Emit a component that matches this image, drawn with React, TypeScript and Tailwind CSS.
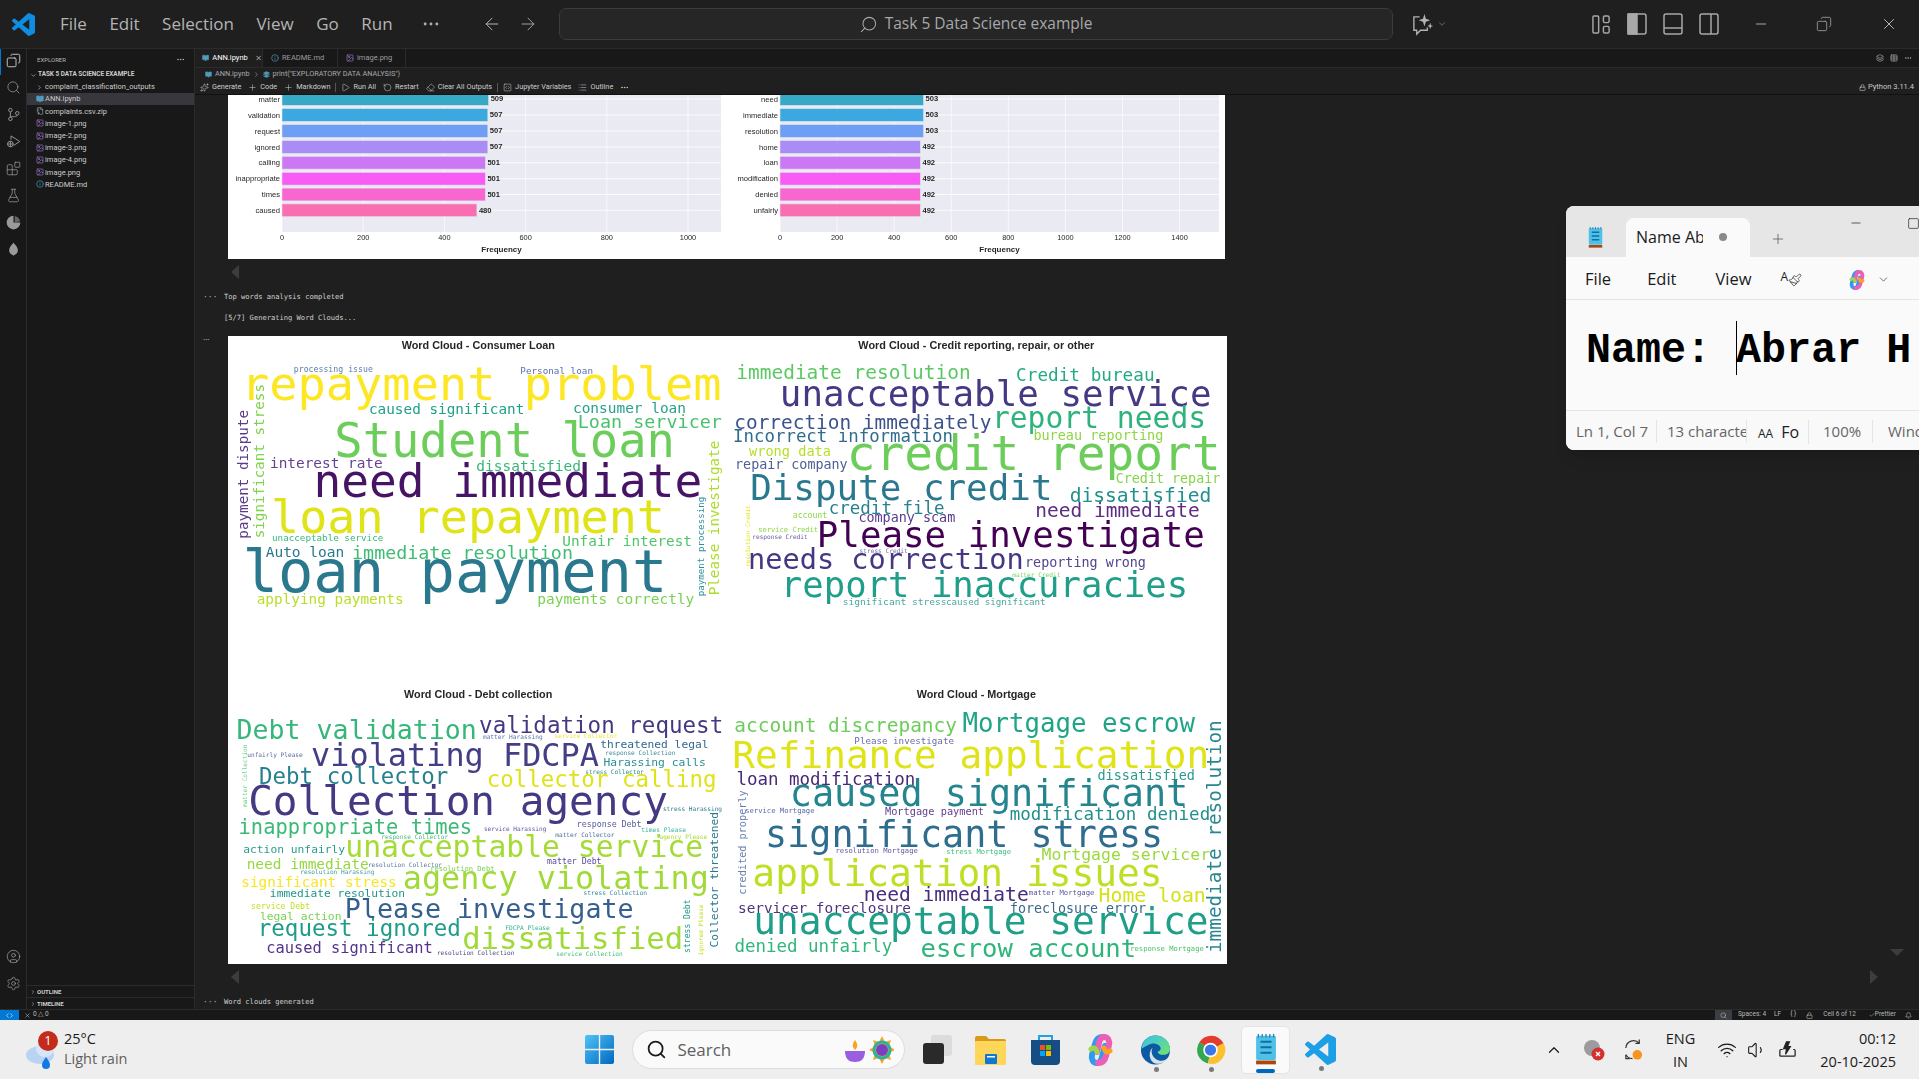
import React from 'react';
import {
  ArrowLeft, ArrowRight, ChevronDown, ChevronRight, ChevronUp, CircleUser, Code, Copy, Eraser, FlaskConical,
  Info, Image as ImageIcon, Layers, List, Lock, Minus, MoreHorizontal, Play, Plus, RotateCcw, Search,
  Settings, Sparkles, Square, SquareCode, Table, Volume1, Wifi, X, FileArchive, Blocks, BookOpen, Paintbrush, Bell, Check,
} from 'lucide-react';

const UI = "font-['Open_Sans',sans-serif]";
const SMALL = "font-['Roboto',sans-serif]";

// ---- word cloud data: text, x1, x2, baseline, colour (coords are 3x of the picture)
type W = [string, number, number, number, string, ('v')?];

const consumerLoan: W[] = [
  ['processing issue', 208, 442, 112, '#5c7fa8'], ['Personal loan', 888, 1102, 117, '#5f6eb0'],
  ['repayment problem', 58, 1480, 195, '#fde725'], ['caused significant', 435, 895, 237, '#1fa187'],
  ['consumer loan', 1047, 1380, 235, '#26a18a'], ['Student loan', 338, 1340, 365, '#6ccd5a'],
  ['Loan servicer', 1062, 1487, 280, '#4ac16d'], ['need immediate', 275, 1422, 487, '#471365'],
  ['interest rate', 138, 470, 400, '#65418f'], ['dissatisfied', 757, 1065, 407, '#35b779'],
  ['loan repayment', 148, 1310, 595, '#dfe318'], ['unacceptable service', 143, 473, 618, '#37b87a'],
  ['Auto loan', 125, 355, 667, '#2a788e'], ['immediate resolution', 385, 1040, 672, '#3fbc73'],
  ['Unfair interest', 1015, 1398, 633, '#50c46a'], ['loan payment', 65, 1315, 770, '#2a788e'],
  ['applying payments', 98, 533, 808, '#b8de29'], ['payments correctly', 940, 1405, 808, '#7ad151'],
  ['significant stress', 607, 150, 117, '#7fd34e', 'v'], ['payment dispute', 608, 228, 70, '#5b3b8c', 'v'],
  ['Please investigate', 778, 320, 1482, '#addc30', 'v'], ['payment processing', 782, 487, 1436, '#2f8f9e', 'v'],
];

const creditReporting: W[] = [
  ['immediate resolution', 23, 718, 133, '#5cc863'], ['Credit bureau', 862, 1270, 138, '#23a983'],
  ['unacceptable service', 157, 1437, 212, '#443983'], ['correction immediately', 17, 780, 282, '#3b528b'],
  ['report needs', 792, 1422, 280, '#2eb37c'], ['Incorrect information', 13, 665, 322, '#2f6c8e'],
  ['bureau reporting', 913, 1297, 315, '#8ed645'], ['wrong data', 60, 300, 362, '#b5de2b'],
  ['repair company', 18, 350, 402, '#4e5f94'], ['credit report', 360, 1462, 405, '#6ccd5a'],
  ['Credit repair', 1160, 1468, 443, '#86d549'], ['Dispute credit', 68, 960, 495, '#2a788e'],
  ['dissatisfied', 1023, 1440, 500, '#21908c'], ['credit file', 300, 640, 538, '#26828e'],
  ['need immediate', 920, 1405, 545, '#5a2d82'], ['account', 190, 290, 550, '#8ed645'],
  ['company scam', 388, 673, 560, '#5b3a8e'], ['service Credit', 86, 263, 592, '#8ed645'],
  ['response Credit', 68, 232, 611, '#6a5a9a'], ['Please investigate', 268, 1417, 635, '#440154'],
  ['stress Credit', 390, 532, 653, '#7b6aa0'], ['needs correction', 60, 875, 702, '#453781'],
  ['reporting wrong', 888, 1245, 695, '#52458e'], ['matter Credit', 848, 990, 725, '#6fd060'],
  ['report inaccuracies', 160, 1367, 787, '#1f9e89'], ['significant stress', 340, 648, 810, '#49a8a0'],
  ['caused significant', 650, 945, 810, '#49a8a0'], ['resolution Credit', 695, 512, 60, '#e8e419', 'v'],
];

const debtCollection: W[] = [
  ['Debt validation', 40, 750, 177, '#35b779'], ['validation request', 767, 1490, 158, '#453781'],
  ['matter Harassing', 775, 952, 178, '#5a7aaa'], ['service Collector', 990, 1175, 173, '#f0e442'],
  ['violating FDCPA', 265, 1115, 258, '#433e85'], ['threatened legal', 1128, 1448, 205, '#31688e'],
  ['unfairly Please', 68, 232, 231, '#5a6a9a'], ['response Collection', 1142, 1350, 224, '#3a8a9a'],
  ['Harassing calls', 1138, 1440, 258, '#2a8f94'], ['stress Collector', 1082, 1255, 281, '#2f8a8a'],
  ['Debt collector', 107, 665, 312, '#26818e'], ['collector calling', 790, 1470, 320, '#dfe318'],
  ['Collection agency', 78, 1320, 405, '#443983'], ['stress Harassing', 1315, 1490, 393, '#2f7a8a'],
  ['inappropriate times', 45, 737, 462, '#3aba76'], ['service Harassing', 778, 963, 452, '#5858a0'],
  ['response Debt', 1057, 1248, 442, '#5a5a9a'], ['times Please', 1250, 1382, 457, '#3ab0a0'],
  ['matter Collector', 992, 1167, 470, '#4a6a9a'], ['response Collector', 470, 668, 477, '#47b87a'],
  ['agency Please', 1305, 1445, 477, '#a6db35'], ['action unfairly', 57, 358, 518, '#2a9d8a'],
  ['unacceptable service', 367, 1428, 530, '#a5db36'], ['need immediate', 68, 428, 568, '#95d840'],
  ['resolution Collector', 430, 650, 560, '#5a7aa0'], ['resolution Debt', 617, 807, 574, '#7ad151'],
  ['matter Debt', 968, 1128, 553, '#5a4a9a'], ['resolution Harassing', 227, 447, 582, '#3f9a9a'],
  ['significant stress', 52, 512, 622, '#f8e621'], ['agency violating', 540, 1445, 628, '#a0da39'],
  ['immediate resolution', 137, 538, 650, '#1f968b'], ['stress Collection', 1077, 1265, 646, '#3a8a9a'],
  ['service Debt', 80, 253, 688, '#c2df23'], ['legal action', 107, 347, 720, '#7ad151'],
  ['Please investigate', 365, 1220, 715, '#355f8d'], ['request ignored', 103, 703, 768, '#1e9c89'],
  ['FDCPA Please', 842, 973, 750, '#2fb08a'], ['dissatisfied', 718, 1368, 807, '#a0da39'],
  ['caused significant', 127, 620, 820, '#55338a'], ['resolution Collection', 637, 867, 824, '#4a4a8a'],
  ['service Collection', 995, 1192, 827, '#3ec07a'], ['matter Collection', 380, 195, 65, '#6fd08a', 'v'],
  ['Collector threatened', 800, 398, 1478, '#2a7a8e', 'v'], ['stress Debt', 817, 660, 1394, '#1f9a8a', 'v'],
  ['ignored Please', 825, 675, 1433, '#c2df23', 'v'],
];

const mortgage: W[] = [
  ['account discrepancy', 17, 677, 155, '#6ccd5a'], ['Mortgage escrow', 703, 1390, 157, '#20a486'],
  ['Please investigate', 375, 670, 192, '#6a6aa8'], ['Refinance application', 15, 1430, 265, '#dfe318'],
  ['dissatisfied', 1105, 1392, 300, '#2b9a8a'], ['loan modification', 23, 552, 316, '#482878'],
  ['caused significant', 187, 1367, 377, '#24858e'], ['service Mortgage', 47, 252, 398, '#5a6aa8'],
  ['Mortgage payment', 467, 760, 405, '#65408f'], ['modification denied', 843, 1437, 420, '#21908c'],
  ['significant stress', 113, 1292, 500, '#2e6d8e'], ['resolution Mortgage', 318, 562, 518, '#6a5aa0'],
  ['stress Mortgage', 650, 842, 521, '#3ec07a'], ['Mortgage servicer', 938, 1437, 540, '#9bd93c'],
  ['application issues', 75, 1290, 617, '#bddf26'], ['need immediate', 405, 892, 662, '#472d7b'],
  ['matter Mortgage', 898, 1092, 646, '#5a5a9e'], ['Home loan', 1110, 1423, 665, '#d5e21a'],
  ['servicer foreclosure', 27, 540, 698, '#50327e'], ['foreclosure error', 843, 1245, 698, '#39688e'],
  ['unacceptable service', 78, 1428, 763, '#1f9e89'], ['denied unfairly', 17, 483, 815, '#31b57b'],
  ['escrow account', 577, 1213, 830, '#2fb47c'], ['response Mortgage', 1202, 1420, 812, '#4ac16d'],
  ['credited properly', 642, 333, 47, '#6a82b0', 'v'], ['immediate resolution', 815, 125, 1472, '#2a868e', 'v'],
];

function WordCloud({ title, tx, vb, words }: { title: string; tx: [number, number, number]; vb: string; words: W[] }) {
  return (
    <svg viewBox={vb} className="w-full h-full blur-[0.4px] font-['DejaVu_Sans_Mono',monospace]">
      <text x={tx[0]} y={tx[2]} textLength={tx[1] - tx[0]} lengthAdjust="spacingAndGlyphs" fontSize={30} fontWeight={700} fill="#262626" className="font-['Liberation_Sans',sans-serif]">
        {title}
      </text>
      {words.map(([t, a, b, c, fill, v], i) => {
        // the measured extents are ink, the font has about 0.07em of bearing on each side
        const fs = Math.abs(b - a) / (t.length * 0.602 - 0.14);
        const adv = t.length * 0.602 * fs;
        return v ? (
          <text key={i} transform={`translate(${c} ${a + 0.07 * fs}) rotate(-90)`} fontSize={fs} fill={fill} textLength={adv} lengthAdjust="spacingAndGlyphs">{t}</text>
        ) : (
          <text key={i} x={a - 0.07 * fs} y={c} fontSize={fs} fill={fill} textLength={adv} lengthAdjust="spacingAndGlyphs">{t}</text>
        );
      })}
    </svg>
  );
}

// ---- bar charts
const barColors = ['#38a9c5', '#3ca8e0', '#6e9ff5', '#a98cf5', '#cc78f5', '#f95cf5', '#f866cf', '#f96eb0'];
const rowY = [99, 115, 131, 147, 162.7, 178.7, 194.5, 210.3];
const leftBars: [string, number][] = [['matter', 509], ['validation', 507], ['request', 507], ['ignored', 507], ['calling', 501], ['inappropriate', 501], ['times', 501], ['caused', 480]];
const rightBars: [string, number][] = [['need', 503], ['immediate', 503], ['resolution', 503], ['home', 492], ['loan', 492], ['modification', 492], ['denied', 492], ['unfairly', 492]];

function Chart({ x0, x1, scale, bars, ticks }: { x0: number; x1: number; scale: number; bars: [string, number][]; ticks: number[] }) {
  return (
    <g>
      <rect x={x0} y={90} width={x1 - x0} height={142} fill="#eaeaf2" />
      {ticks.map((t) => <line key={t} x1={x0 + t * scale} x2={x0 + t * scale} y1={90} y2={232} stroke="#fff" strokeWidth={0.7} />)}
      {bars.map(([name, v], i) => (
        <g key={name}>
          <line x1={x0} x2={x1} y1={rowY[i]} y2={rowY[i]} stroke="#fff" strokeWidth={0.8} />
          <rect x={x0} y={rowY[i] - 6.4} width={v * scale} height={12.8} fill={barColors[i]} stroke="#dfe3ee" strokeWidth={0.6} />
          <text x={x0 - 2} y={rowY[i] + 2.6} textAnchor="end" fontSize={7.6} fill="#262626">{name}</text>
          <text x={x0 + v * scale + 2} y={rowY[i] + 2.3} fontSize={7.6} fontWeight={700} fill="#262626">{v}</text>
        </g>
      ))}
      {ticks.map((t) => <text key={t} x={x0 + t * scale} y={240} textAnchor="middle" fontSize={7.4} fill="#262626">{t}</text>)}
      <text x={(x0 + x1) / 2} y={251.5} textAnchor="middle" fontSize={8} fontWeight={700} fill="#262626">Frequency</text>
    </g>
  );
}

function VsCodeLogo({ className, fill = '#23a3ee' }: { className: string; fill?: string }) {
  return (
    <svg viewBox="0 0 24 24" className={className} fill={fill}>
      <path d="M23.15 2.587L18.21.21a1.494 1.494 0 0 0-1.705.29l-9.46 8.63-4.12-3.128a.999.999 0 0 0-1.276.057L.327 7.261A1 1 0 0 0 .326 8.74L3.899 12 .326 15.26a1 1 0 0 0 .001 1.479L1.65 17.94a.999.999 0 0 0 1.276.057l4.12-3.128 9.46 8.63a1.492 1.492 0 0 0 1.704.29l4.942-2.377A1.5 1.5 0 0 0 24 20.06V3.939a1.5 1.5 0 0 0-.85-1.352zm-5.146 14.861L10.826 12l7.178-5.448v10.896z" />
    </svg>
  );
}

function NotepadIcon({ className }: { className: string }) {
  return (
    <svg viewBox="0 0 20 28" className={className}>
      <rect x="1" y="1.5" width="18" height="22" rx="1.5" fill="#4fc0e8" />
      <rect x="1" y="24" width="18" height="3.5" fill="#a8480f" />
      <path d="M5 7h10M5 12h10M5 17h10" stroke="#0f6f9e" strokeWidth="1.8" />
      <path d="M3 0v3M6.5 0v3M10 0v3M13.5 0v3M17 0v3" stroke="#0f6f9e" strokeWidth="1" />
    </svg>
  );
}

function CopilotIcon({ className }: { className: string }) {
  return (
    <svg viewBox="0 0 31 32" className={className}>
      <path d="M18 3c-5 0-7 3-8 7L7 21c-1 4 1 8 5 8 3 0 4-2 5-6l3-11" fill="none" stroke="#2f9bf0" strokeWidth="6" strokeLinecap="round" />
      <path d="M13 29c5 0 7-3 8-7l3-11c1-4-1-8-5-8-3 0-4 2-5 6l-2 9" fill="none" stroke="#ec5fb4" strokeWidth="6" strokeLinecap="round" />
      <path d="M6 15c3-2 5-1 6 3" fill="none" stroke="#9ed84a" strokeWidth="5" strokeLinecap="round" />
      <path d="M25 17c-3 2-5 1-6-3" fill="none" stroke="#f6a623" strokeWidth="5" strokeLinecap="round" />
    </svg>
  );
}

function TitleBar() {
  const menus = ['File', 'Edit', 'Selection', 'View', 'Go', 'Run'];
  return (
    <div className={`h-[49px] shrink-0 flex items-center border-b border-[#2b2b2b] bg-[#1f1f1f] ${UI}`}>
      <VsCodeLogo className="ml-[12px] w-[23px] h-[23px]" fill="#0e8ee0" />
      <div className="ml-[25px] flex gap-[22.5px] text-[17px] text-[#b4b4b4]">
        {menus.map((m) => <span key={m}>{m}</span>)}
      </div>
      <MoreHorizontal className="ml-[28px] w-[20px] h-[20px] text-[#b4b4b4]" strokeWidth={1.5} />
      <ArrowLeft className="ml-[41px] w-[20px] h-[20px] text-[#b4b4b4]" strokeWidth={1.2} />
      <ArrowRight className="ml-[16px] w-[20px] h-[20px] text-[#a0a0a0]" strokeWidth={1.2} />
      <div className="ml-[21px] w-[834px] h-[32px] rounded-[7px] border border-[#3c3c3c] bg-[#262626] flex items-center justify-center gap-[7px] text-[#a8a8a8] text-[15.5px]">
        <Search className="w-[19px] h-[19px] -scale-x-100" strokeWidth={1.3} />
        <span>Task 5 Data Science example</span>
      </div>
      <svg viewBox="0 0 24 24" className="ml-[18px] w-[23px] h-[23px] text-[#b4b4b4]" fill="none" stroke="currentColor" strokeWidth="1.4">
        <path d="M9 4H3v14h3v4l4-4h7v-3" />
        <path d="M14 1l1.5 5L20 7.5 15.5 9 14 14l-1.5-5L8 7.5 12.500 6z" fill="currentColor" stroke="none" />
        <path d="M20 10l.8 2.700L23 13.500l-2.200.8L20 17l-.8-2.700-2.200-.8 2.200-.8z" fill="currentColor" stroke="none" />
      </svg>
      <ChevronDown className="ml-[3px] w-[10px] h-[10px] text-[#777]" />
      <div className="ml-[145px] flex items-center gap-[16px] text-[#a8a8a8]">
        <svg viewBox="0 0 20 22" className="w-[19px] h-[21px]" fill="none" stroke="currentColor" strokeWidth="1.5">
          <rect x="1" y="2" width="6" height="18" rx="1" /><rect x="12" y="2" width="6" height="7" rx="1.5" /><rect x="12" y="13" width="6" height="7" rx="1.5" />
        </svg>
        <svg viewBox="0 0 20 22" className="w-[20px] h-[22px]" fill="none" stroke="currentColor" strokeWidth="1.5">
          <rect x="1" y="1" width="18" height="20" rx="2" /><rect x="1" y="1" width="9" height="20" fill="currentColor" />
        </svg>
        <svg viewBox="0 0 20 22" className="w-[20px] h-[22px]" fill="none" stroke="currentColor" strokeWidth="1.5">
          <rect x="1" y="1" width="18" height="20" rx="2" /><path d="M1 15h18" />
        </svg>
        <svg viewBox="0 0 20 22" className="w-[20px] h-[22px]" fill="none" stroke="currentColor" strokeWidth="1.5">
          <rect x="1" y="1" width="18" height="20" rx="2" /><path d="M12 1v20" />
        </svg>
      </div>
      <Minus className="ml-[34px] w-[16px] h-[16px] text-[#c8c8c8]" strokeWidth={1.2} />
      <Copy className="ml-[47px] w-[16px] h-[16px] text-[#a8a8a8] -scale-x-100" strokeWidth={1.2} />
      <X className="ml-[48px] w-[18px] h-[18px] text-[#d4d4d4]" strokeWidth={1.1} />
    </div>
  );
}

function ActivityBar() {
  const cls = 'w-[15px] h-[15px]';
  return (
    <div className="w-[27px] shrink-0 flex flex-col items-center bg-[#181818] border-r border-[#2b2b2b] relative">
      <div className="absolute left-0 top-0 w-[1px] h-[26px] bg-[#0078d4]" />
      <Copy className="mt-[4px] w-[15px] h-[15px] text-[#d7d7d7] -scale-x-100" strokeWidth={1.4} />
      <div className="mt-[12px] flex flex-col gap-[12px] text-[#9a9a9a]">
        <Search className={cls} strokeWidth={1.2} />
        <svg viewBox="0 0 24 24" className={cls} fill="none" stroke="currentColor" strokeWidth="1.5">
          <circle cx="7" cy="5" r="2.800" /><circle cx="7" cy="19" r="2.800" /><circle cx="18" cy="10" r="2.800" />
          <path d="M7 8v8M18 13c0 3-8 2-11 3" />
        </svg>
        <svg viewBox="0 0 24 24" className={cls} fill="none" stroke="currentColor" strokeWidth="1.5">
          <path d="M8 9V3l14 9-10 6.500" /><circle cx="7" cy="16" r="4.500" /><path d="M7 11.500V21M2 16h10" />
        </svg>
        <Blocks className={cls} strokeWidth={1.2} />
        <FlaskConical className={cls} strokeWidth={1.2} />
        <svg viewBox="0 0 24 24" className={cls} fill="currentColor">
          <path d="M12 1a11 11 0 1 0 11 11h-11z" /><path d="M14 1.500A11 11 0 0 1 22.500 10L14 12z" opacity="0.6" />
        </svg>
        <svg viewBox="0 0 24 24" className={cls} fill="currentColor">
          <path d="M12 1c4 4 7 8 7 12 0 4-3 7-6.500 8l-.5 2-.5-2C8 20 5 17 5 13c0-4 3-8 7-12z" />
        </svg>
      </div>
      <div className="mt-auto mb-[18px] flex flex-col gap-[12px] text-[#9a9a9a]">
        <CircleUser className={cls} strokeWidth={1.2} />
        <Settings className={cls} strokeWidth={1.2} />
      </div>
    </div>
  );
}

function ImgGlyph() {
  return <ImageIcon className="w-[8px] h-[8px] text-[#a074c4]" strokeWidth={2} />;
}

function FileRow({ icon, name, selected }: { icon: React.ReactNode; name: string; selected?: boolean }) {
  return (
    <div className={`h-[12.2px] pl-[9px] flex items-center gap-[1px] ${selected ? 'bg-[#37373d]' : ''}`}>
      <span className="w-[8px] flex justify-center">{icon}</span>
      <span>{name}</span>
    </div>
  );
}

function SideBar() {
  return (
    <div className={`w-[168px] shrink-0 flex flex-col bg-[#181818] border-r border-[#2b2b2b] text-[#cccccc] text-[7.5px] ${SMALL}`}>
      <div className="h-[20px] pl-[10px] pr-[9px] flex items-center justify-between text-[6px] text-[#b4b4b4]">
        <span>EXPLORER</span>
        <MoreHorizontal className="w-[9px] h-[9px]" />
      </div>
      <div className="h-[12px] pl-[3px] flex items-center gap-[1px] font-bold text-[6.4px]">
        <ChevronDown className="w-[7px] h-[7px]" />
        <span>TASK 5 DATA SCIENCE EXAMPLE</span>
      </div>
      <div className="h-[12px] pl-[9px] flex items-center gap-[2px]">
        <ChevronRight className="w-[7px] h-[7px]" />
        <span>complaint_classification_outputs</span>
      </div>
      <FileRow selected name="ANN.ipynb" icon={<BookOpen className="w-[8px] h-[8px] text-[#519aba]" fill="#519aba" />} />
      <FileRow name="complaints.csv.zip" icon={<FileArchive className="w-[8px] h-[8px] text-[#9aa7b0]" />} />
      <FileRow name="image-1.png" icon={<ImgGlyph />} />
      <FileRow name="image-2.png" icon={<ImgGlyph />} />
      <FileRow name="image-3.png" icon={<ImgGlyph />} />
      <FileRow name="image-4.png" icon={<ImgGlyph />} />
      <FileRow name="image.png" icon={<ImgGlyph />} />
      <FileRow name="README.md" icon={<Info className="w-[8px] h-[8px] text-[#519aba]" />} />
      <div className="mt-auto h-[12px] pl-[3px] flex items-center gap-[1px] font-bold text-[6px] border-t border-[#2b2b2b]">
        <ChevronRight className="w-[6px] h-[6px]" /> OUTLINE
      </div>
      <div className="h-[12px] pl-[3px] flex items-center gap-[1px] font-bold text-[6px] border-t border-[#2b2b2b]">
        <ChevronRight className="w-[6px] h-[6px]" /> TIMELINE
      </div>
    </div>
  );
}

function TabBar() {
  return (
    <div className={`h-[19px] shrink-0 flex bg-[#181818] border-b border-[#2b2b2b] text-[7.5px] text-[#9d9d9d] ${SMALL}`}>
      <div className="w-[68px] pl-[7px] flex items-center gap-[3px] bg-[#1f1f1f] border-r border-[#2b2b2b] text-white">
        <BookOpen className="w-[8px] h-[8px] text-[#519aba]" fill="#519aba" />
        <span>ANN.ipynb</span>
        <X className="ml-[4px] w-[8px] h-[8px]" />
      </div>
      <div className="w-[75px] pl-[8px] flex items-center gap-[3px] border-r border-[#2b2b2b]">
        <Info className="w-[8px] h-[8px] text-[#519aba]" />
        <span>README.md</span>
      </div>
      <div className="w-[68px] pl-[8px] flex items-center gap-[3px] border-r border-[#2b2b2b]">
        <ImgGlyph />
        <span>image.png</span>
      </div>
      <div className="ml-auto pr-[7px] flex items-center gap-[6px] text-[#aaa]">
        <Layers className="w-[8px] h-[8px]" />
        <Table className="w-[8px] h-[8px]" />
        <MoreHorizontal className="w-[8px] h-[8px]" />
      </div>
    </div>
  );
}

function NotebookToolbar() {
  const Item = ({ icon, label }: { icon: React.ReactNode; label: string }) => (
    <span className="flex items-center gap-[3px]">{icon}{label}</span>
  );
  const cls = 'w-[9px] h-[9px]';
  return (
    <div className={`shrink-0 bg-[#1f1f1f] border-b border-[#111] text-[7.3px] text-[#cccccc] ${SMALL}`}>
      <div className="h-[12px] pl-[10px] flex items-center gap-[3px] text-[#a9a9a9]">
        <BookOpen className="w-[7px] h-[7px] text-[#519aba]" fill="#519aba" />
        <span>ANN.ipynb</span>
        <ChevronRight className="w-[7px] h-[7px]" />
        <Layers className="w-[7px] h-[7px] text-[#519aba]" fill="#519aba" />
        <span>print("EXPLORATORY DATA ANALYSIS")</span>
      </div>
      <div className="h-[14px] pl-[5px] pr-[5px] flex items-center gap-[7px]">
        <Item icon={<Sparkles className={cls} strokeWidth={1.4} />} label="Generate" />
        <Item icon={<Plus className={cls} strokeWidth={1.4} />} label="Code" />
        <Item icon={<Plus className={cls} strokeWidth={1.4} />} label="Markdown" />
        <span className="-mx-[2px] w-px h-[9px] bg-[#555]" />
        <Item icon={<Play className={cls} strokeWidth={1.4} />} label="Run All" />
        <Item icon={<RotateCcw className={cls} strokeWidth={1.4} />} label="Restart" />
        <Item icon={<Eraser className={cls} strokeWidth={1.4} />} label="Clear All Outputs" />
        <span className="-mx-[2px] w-px h-[9px] bg-[#555]" />
        <Item icon={<SquareCode className={cls} strokeWidth={1.4} />} label="Jupyter Variables" />
        <Item icon={<List className={cls} strokeWidth={1.4} />} label="Outline" />
        <MoreHorizontal className={cls} />
        <span className="ml-auto flex items-center gap-[2px] text-[7.5px]">
          <Lock className="w-[7px] h-[7px]" /> Python 3.11.4
        </span>
      </div>
    </div>
  );
}

function OutputRow({ dots, children, className }: { dots?: boolean; children?: React.ReactNode; className?: string }) {
  return (
    <div className={`flex ${className ?? ''}`}>
      <div className="w-[29px] shrink-0 pl-[8px] text-[#aaa] text-[8px] leading-[8px]">{dots ? '···' : ''}</div>
      {children}
    </div>
  );
}

function ScrollArrow({ right }: { right?: boolean }) {
  return right
    ? <span className="w-0 h-0 border-y-[7px] border-y-transparent border-l-[8px] border-l-[#3d3d3d]" />
    : <span className="w-0 h-0 border-y-[7px] border-y-transparent border-r-[8px] border-r-[#3d3d3d]" />;
}

function Notebook() {
  const mono = "font-['DejaVu_Sans_Mono',monospace] text-[7.1px] text-[#cfcfcf]";
  return (
    <div className="flex-1 min-h-0 overflow-hidden bg-[#1f1f1f] relative">
      <OutputRow>
        <svg viewBox="228 95 997 164" className="ml-[4px] w-[997px] h-[164px] bg-white font-['Liberation_Sans',sans-serif] blur-[0.2px]">
          <Chart x0={282} x1={721} scale={0.406} bars={leftBars} ticks={[0, 200, 400, 600, 800, 1000]} />
          <Chart x0={780} x1={1219} scale={0.2854} bars={rightBars} ticks={[0, 200, 400, 600, 800, 1000, 1200, 1400]} />
        </svg>
      </OutputRow>
      <OutputRow className="h-[25px] items-center">
        <span className="ml-[7px] flex"><ScrollArrow /></span>
      </OutputRow>
      <OutputRow dots className={`mt-[3px] h-[21px] items-center ${mono}`}>
        <span>Top words analysis completed</span>
      </OutputRow>
      <OutputRow className={`h-[21px] items-center ${mono}`}>
        <span>[5/7] Generating Word Clouds...</span>
      </OutputRow>
      <div className="h-[7px]" />
      <OutputRow dots>
        <div className="ml-[4px] w-[999px] h-[628px] bg-white grid grid-cols-[502px_497px] grid-rows-[344px_284px]">
          <WordCloud title="Word Cloud - Consumer Loan" tx={[530, 990, 43]} vb="9 3 1506 1032" words={consumerLoan} />
          <WordCloud title="Word Cloud - Credit reporting, repair, or other" tx={[385, 1093, 43]} vb="0 3 1491 1032" words={creditReporting} />
          <WordCloud title="Word Cloud - Debt collection" tx={[537, 982, 55]} vb="9 0 1506 852" words={debtCollection} />
          <WordCloud title="Word Cloud - Mortgage" tx={[560, 918, 55]} vb="0 0 1491 852" words={mortgage} />
        </div>
      </OutputRow>
      <OutputRow className="h-[25px] items-center">
        <div className="ml-[7px] w-[1647px] flex items-center justify-between">
          <ScrollArrow />
          <ScrollArrow right />
        </div>
      </OutputRow>
      <OutputRow dots className={`mt-[3px] h-[21px] items-center ${mono}`}>
        <span>Word clouds generated</span>
      </OutputRow>
      <div className="absolute right-[15px] top-[854px] w-0 h-0 border-x-[7px] border-x-transparent border-t-[7px] border-t-[#3d3d3d]" />
    </div>
  );
}

function StatusBar() {
  return (
    <div className={`h-[11px] shrink-0 flex items-center bg-[#181818] border-t border-[#2b2b2b] text-[6.5px] text-[#b8b8b8] ${SMALL}`}>
      <div className="w-[19px] h-full bg-[#0078d4] flex items-center justify-center text-white">
        <Code className="w-[7px] h-[7px]" />
      </div>
      <span className="ml-[5px] flex items-center gap-[2px]"><X className="w-[7px] h-[7px]" />0 △ 0</span>
      <div className="ml-auto flex items-center h-full">
        <div className="w-[17px] h-full bg-[#3a3d41] flex items-center justify-center"><Search className="w-[7px] h-[7px]" /></div>
        <span className="ml-[6px]">Spaces: 4</span>
        <span className="ml-[8px]">LF</span>
        <span className="ml-[9px]">{'{ }'}</span>
        <Lock className="ml-[10px] w-[7px] h-[7px]" />
        <span className="ml-[10px]">Cell 6 of 12</span>
        <span className="ml-[13px] flex items-center"><Check className="w-[6px] h-[6px]" />Prettier</span>
        <Bell className="ml-[9px] mr-[7px] w-[7px] h-[7px]" />
      </div>
    </div>
  );
}

function Notepad() {
  return (
    <div className={`absolute left-[1566px] top-[206px] w-[400px] h-[244px] rounded-[8px] overflow-hidden bg-[#fafafa] shadow-lg flex flex-col text-[#1b1b1b] ${UI}`}>
      <div className="h-[51px] shrink-0 bg-[#e6e6e6] flex items-end relative">
        <NotepadIcon className="absolute left-[22px] top-[21px] w-[15px] h-[21px]" />
        <div className="ml-[60px] w-[124px] h-[39px] rounded-t-[8px] bg-[#fafafa] flex items-center pl-[10px] pb-[2px] text-[16px] relative">
          <span className="w-[67px] overflow-hidden whitespace-nowrap">Name Abrar</span>
          <span className="absolute left-[93px] w-[8px] h-[8px] rounded-full bg-[#8a8a8a]" />
        </div>
        <Plus className="ml-[20px] mb-[10px] w-[16px] h-[16px] text-[#666]" strokeWidth={1.3} />
        <Minus className="absolute left-[283px] top-[10px] w-[14px] h-[14px]" strokeWidth={1.2} />
        <Square className="absolute left-[341px] top-[11px] w-[13px] h-[13px]" strokeWidth={1.2} />
      </div>
      <div className="h-[43px] shrink-0 pt-[3px] flex items-center border-b border-[#e5e5e5] text-[16.5px] relative">
        <span className="ml-[19px]">File</span>
        <span className="ml-[36px]">Edit</span>
        <span className="ml-[39px]">View</span>
        <span className="ml-[29px] flex items-center"><span className="text-[12px] -mt-[6px]">A</span><Paintbrush className="w-[14px] h-[14px]" strokeWidth={1.2} /></span>
        <CopilotIcon className="ml-[45px] w-[20px] h-[20px]" />
        <ChevronDown className="ml-[10px] w-[13px] h-[13px] text-[#555]" strokeWidth={1.5} />
      </div>
      <div className="h-[110px] shrink-0 pl-[20px] pt-[26px] flex items-start font-['Liberation_Mono',monospace] font-bold text-[41.7px] leading-[50px] text-black whitespace-pre relative">
        Name: Abrar H
        <span className="absolute left-[170px] top-[21px] w-px h-[54px] bg-black" />
      </div>
      <div className="flex-1 pt-[2px] flex items-center border-t border-[#e5e5e5] text-[15px] text-[#666] bg-[#f9f9f9]">
        <span className="w-[91px] pl-[10px] border-r border-[#e5e5e5]">Ln 1, Col 7</span>
        <span className="w-[90px] pl-[10px] border-r border-[#e5e5e5] overflow-hidden whitespace-nowrap">13 characters</span>
        <span className="w-[62px] pl-[11px] border-r border-[#e5e5e5] text-[#222] flex items-baseline gap-[8px]"><span className="text-[12px]">AA</span><span className="text-[16px]">Fo</span></span>
        <span className="w-[64px] pl-[14px] border-r border-[#e5e5e5]">100%</span>
        <span className="pl-[15px]">Windows</span>
      </div>
    </div>
  );
}

function Taskbar() {
  const dot = <span className="absolute -bottom-[6px] left-1/2 -ml-[2px] w-[5px] h-[5px] rounded-full bg-[#7a7a7a]" />;
  return (
    <div className={`h-[59px] shrink-0 bg-[#eeeeee] flex items-center relative text-[#1b1b1b] ${UI}`}>
      <div className="ml-[25px] w-[30px] h-[38px] relative">
        <svg viewBox="0 0 30 38" className="w-[30px] h-[38px]">
          <ellipse cx="15" cy="24" rx="14" ry="9" fill="#b9d3f2" /><ellipse cx="20" cy="18" rx="9" ry="8" fill="#d6e6f8" />
          <path d="M21 26c-3 4-4 6-4 8a4 4 0 0 0 8 0c0-2-1-4-4-8z" fill="#1477e6" />
        </svg>
        <span className="absolute left-[13px] top-[0px] w-[20px] h-[20px] rounded-full bg-[#c42b1c] text-white text-[13px] flex items-center justify-center">1</span>
      </div>
      <div className="ml-[9px] flex flex-col text-[14.5px] leading-[20px]">
        <span className="-mt-[1px]">25°C</span>
        <span className="text-[#5f5f5f]">Light rain</span>
      </div>
      <svg viewBox="0 0 29 29" className="ml-[458px] w-[29px] h-[29px]">
        <defs><linearGradient id="win" x1="0" y1="0" x2="1" y2="1"><stop offset="0" stopColor="#4fc3f7" /><stop offset="1" stopColor="#0067c0" /></linearGradient></defs>
        <path d="M0 2a2 2 0 0 1 2-2h11.800v13.800H0zM15.200 0H27a2 2 0 0 1 2 2v11.800H15.200zM0 15.200h13.800V29H2a2 2 0 0 1-2-2zM15.200 15.200H29V27a2 2 0 0 1-2 2H15.200z" fill="url(#win)" />
      </svg>
      <div className="ml-[18px] w-[273px] h-[39px] rounded-full bg-[#fafafa] border border-[#dcdcdc] flex items-center pl-[13px] text-[17px] text-[#5f5f5f]">
        <Search className="w-[21px] h-[21px] text-[#1b1b1b]" strokeWidth={2} />
        <span className="ml-[10px]">Search</span>
        <svg viewBox="0 0 52 30" className="ml-auto mr-[10px] w-[52px] h-[30px]">
          <path d="M3 16h20c0 8-4 11-10 11S3 24 3 16z" fill="#9a5fe0" /><path d="M13 5c3 4 3 7 0 10-3-3-3-6 0-10z" fill="#f6a623" />
          <path d="M40 1l3 6 6-2-2 6 6 4-6 3 2 7-6-2-3 6-3-6-6 2 2-7-6-3 6-4-2-6 6 2z" fill="#f5a623" /><circle cx="40" cy="15" r="6" fill="#7a3fc0" /><circle cx="40" cy="15" r="8" fill="none" stroke="#26b3a0" strokeWidth="3" />
        </svg>
      </div>
      <svg viewBox="0 0 29 29" className="ml-[18px] w-[29px] h-[29px]">
        <rect x="8" y="0" width="21" height="21" rx="3" fill="#dcdcdc" /><rect x="0" y="8" width="21" height="21" rx="3" fill="#2a2a2a" />
      </svg>
      {/* explorer */}
      <svg viewBox="0 0 31 30" className="ml-[23px] w-[31px] h-[30px]">
        <path d="M0 3a2 2 0 0 1 2-2h9l3 3h15a2 2 0 0 1 2 2v22H0z" fill="#d99a1c" /><rect x="0" y="6" width="31" height="24" rx="1" fill="#fdd65a" /><rect x="10" y="19" width="12" height="10" rx="1" fill="#0f78d4" /><rect x="12" y="21" width="8" height="1.500" fill="#fff" />
      </svg>
      {/* store */}
      <svg viewBox="0 0 31 32" className="ml-[24px] w-[31px] h-[32px]">
        <path d="M9 6V2h13v4" fill="none" stroke="#1fa3e6" strokeWidth="2" /><path d="M1 6h29v21a4 4 0 0 1-4 4H5a4 4 0 0 1-4-4z" fill="#164d84" />
        <rect x="10" y="11" width="5" height="5" fill="#f25022" /><rect x="16" y="11" width="5" height="5" fill="#7fba00" /><rect x="10" y="17" width="5" height="5" fill="#00a4ef" /><rect x="16" y="17" width="5" height="5" fill="#ffb900" />
      </svg>
      <CopilotIcon className="ml-[24px] w-[31px] h-[32px]" />
      <div className="ml-[24px] relative">
        <svg viewBox="0 0 32 32" className="w-[31px] h-[32px]">
          <defs><linearGradient id="edgeA" x1="0" y1="0" x2="1" y2="1"><stop offset="0" stopColor="#35c1f1" /><stop offset="1" stopColor="#75e36a" /></linearGradient></defs>
          <circle cx="16" cy="16" r="15" fill="#0c59a4" />
          <path d="M1.500 15C2 7 8 1 16 1c8 0 15 6 15 14 0 4-3 6-7 6-3 0-5-1-6-3 3-1 4-3 3-5-2-4-8-5-13-2-3 1-5 3-7.500 4z" fill="url(#edgeA)" />
          <path d="M13 14c-2 3-1 8 3 11 4 3 9 3 13-1-2 4-7 7-13 6-4-1-6-5-6-9 0-3 1-6 3-7z" fill="#eeeeee" opacity="0.9" />
        </svg>
        {dot}
      </div>
      <div className="ml-[24px] relative">
        <svg viewBox="0 0 32 32" className="w-[31px] h-[32px]">
          <path d="M16 16 4.500 8A14.500 14.500 0 0 1 29.500 9z" fill="#e33b2e" /><path d="M16 16 4.500 8a14.500 14.500 0 0 0 9 22z" fill="#2fa84f" /><path d="M16 16l13.500-7a14.500 14.500 0 0 1-16 21z" fill="#fbc02d" /><circle cx="16" cy="16" r="7.500" fill="#fff" /><circle cx="16" cy="16" r="5.800" fill="#3b78e7" />
        </svg>
        {dot}
      </div>
      <div className="ml-[15px] w-[49px] h-[48px] rounded-[5px] bg-[#fafafa] border border-[#e4e4e4] flex flex-col items-center pt-[7px] relative">
        <NotepadIcon className="w-[22px] h-[31px]" />
        <span className="absolute bottom-0 w-[19px] h-[4px] rounded-full bg-[#0067c0]" />
      </div>
      <div className="ml-[15px] relative">
        <VsCodeLogo className="w-[31px] h-[31px]" fill="#1c9fe6" />
        {dot}
      </div>
      <ChevronUp className="ml-[209px] w-[18px] h-[18px]" strokeWidth={1.6} />
      <svg viewBox="0 0 22 24" className="ml-[20px] w-[22px] h-[24px]">
        <circle cx="9" cy="10" r="8" fill="#9c9c9c" /><circle cx="15" cy="16" r="6.500" fill="#d32f2f" /><path d="M13 14l4 4m0-4l-4 4" stroke="#fff" strokeWidth="1.400" />
      </svg>
      <svg viewBox="0 0 22 26" className="ml-[18px] w-[21px] h-[26px]" fill="none" stroke="#333" strokeWidth="1.300">
        <path d="M3 11a8 8 0 0 1 14-5M17 2v4h-4M3 18v4h4" /><path d="M3 18a8 8 0 0 0 7 4" /><circle cx="15" cy="18" r="5" fill="#f7941d" stroke="none" />
      </svg>
      <div className="ml-[21px] w-[30px] flex flex-col items-center text-[14.5px] leading-[23px]">
        <span>ENG</span><span>IN</span>
      </div>
      <Wifi className="ml-[22px] w-[20px] h-[20px]" strokeWidth={1.5} />
      <Volume1 className="ml-[10px] w-[20px] h-[20px]" strokeWidth={1.3} />
      <svg viewBox="0 0 22 22" className="ml-[10px] w-[21px] h-[21px]" fill="none" stroke="#222" strokeWidth="1.300">
        <path d="M3 18h15a1 1 0 0 0 1-1v-5a1 1 0 0 0-1-1h-1M3 18v-6a1 1 0 0 1 1-1h2" /><path d="M10 3 7 10h3l-1 6 5-8h-3l2-5z" fill="#222" />
      </svg>
      <div className="ml-auto mr-[23px] flex flex-col items-end text-[14.5px] leading-[23px]">
        <span>00:12</span><span>20-10-2025</span>
      </div>
    </div>
  );
}

export default function App() {
  return (
    <div className="w-[1919px] h-[1079px] overflow-hidden flex flex-col bg-[#1f1f1f] relative">
      <TitleBar />
      <div className="flex-1 min-h-0 flex">
        <ActivityBar />
        <SideBar />
        <div className="flex-1 min-w-0 flex flex-col">
          <TabBar />
          <NotebookToolbar />
          <Notebook />
        </div>
      </div>
      <StatusBar />
      <Taskbar />
      <Notepad />
    </div>
  );
}
